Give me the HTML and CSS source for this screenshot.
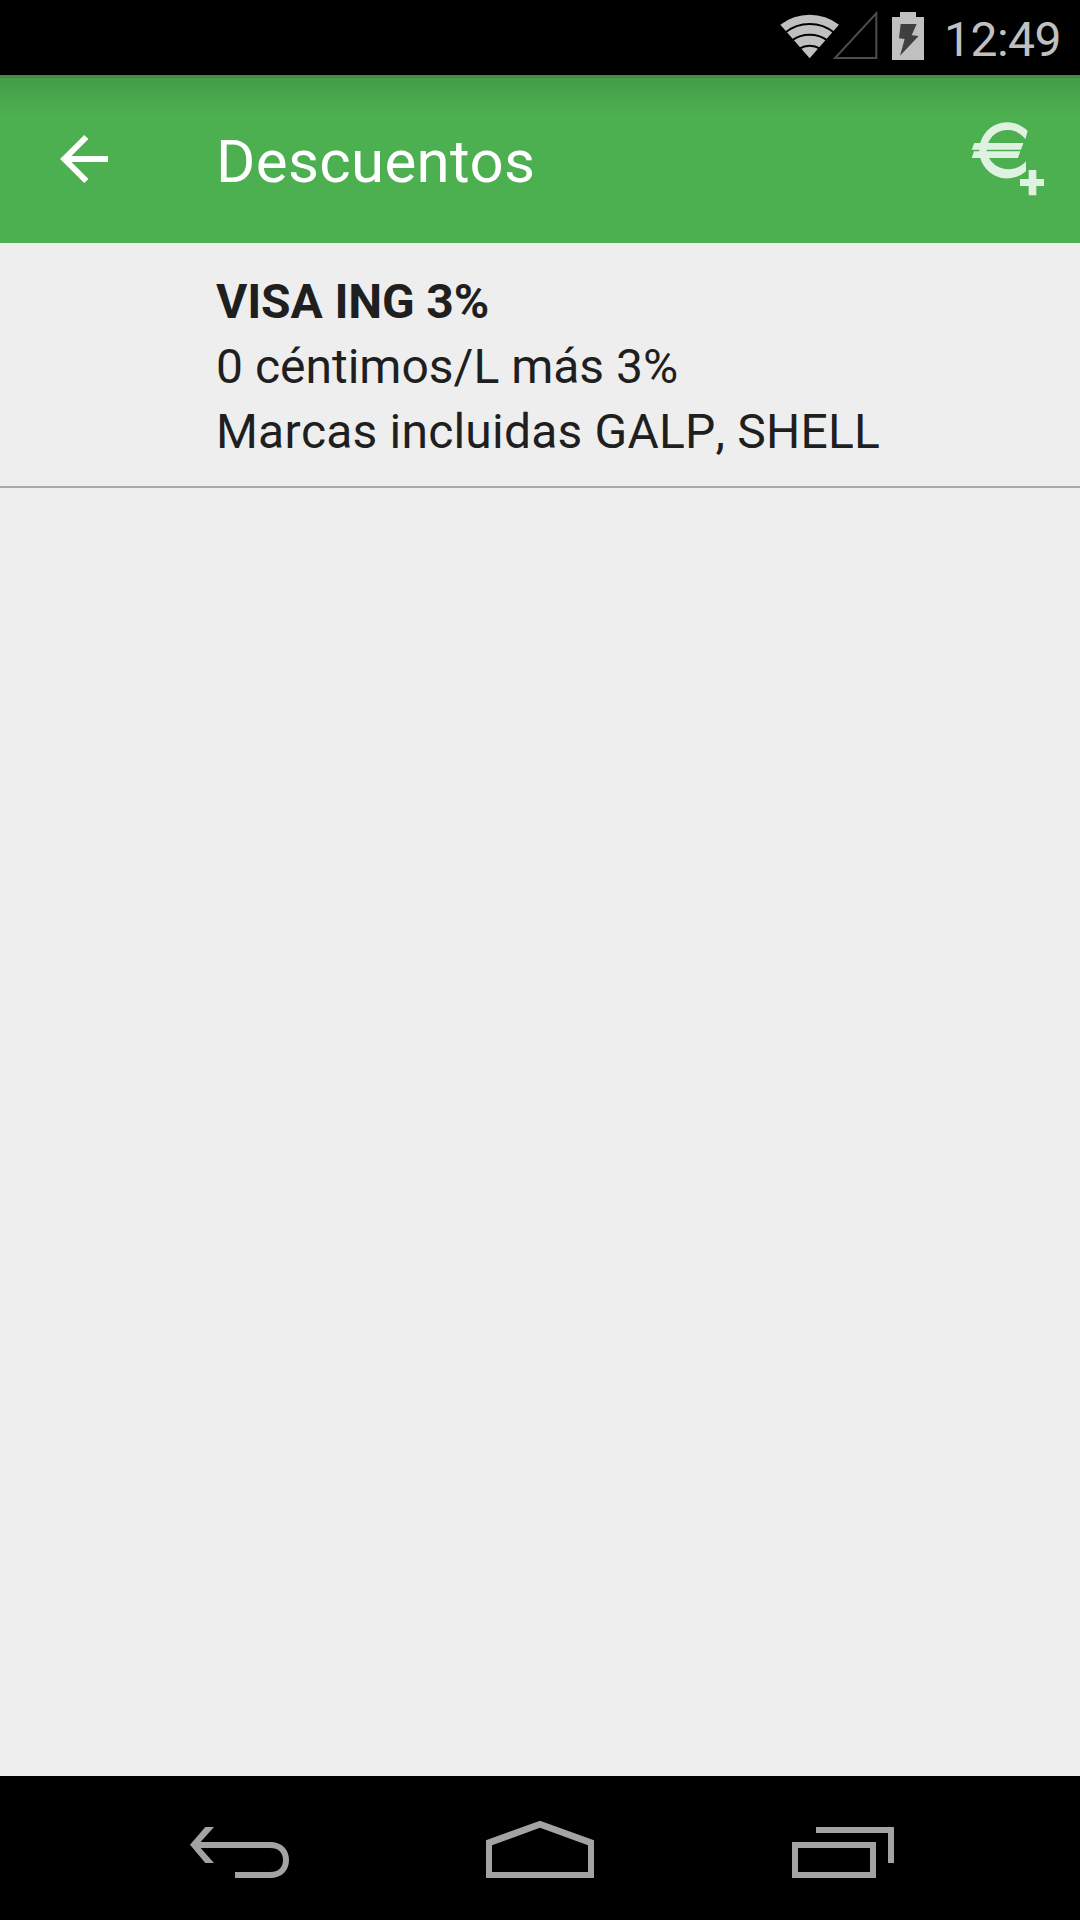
FILE: index.html
```html
<!DOCTYPE html>
<html lang="es">
<head>
<meta charset="utf-8">
<title>Descuentos</title>
<link rel="stylesheet" href="styles.css">
</head>
<body>
<div class="screen">
  <div class="status-bar">
    <svg class="status-icons" viewBox="0 0 480 225" aria-hidden="true">
      <g fill="#c0c0c0">
        <path d="M119 175L31 74A144 144 0 0 1 207 74Z"/>
        <path d="M366 51h24V36h48v15h24v129h-96z"/>
      </g>
      <g fill="none" stroke="#000" stroke-width="6">
        <path d="M45 98A118 118 0 0 1 193 98"/>
        <path d="M66 121A91 91 0 0 1 172 121"/>
        <path d="M88 146A58 58 0 0 1 150 146"/>
      </g>
      <path d="M195 174H319V40Z" fill="none" stroke="#4c4c4c" stroke-width="6"/>
      <path d="M392 72h48l-15 34 21 2-56 59 14-50-17-2z" fill="#404040"/>
    </svg>
    <span class="clock">12:49</span>
  </div>
  <header class="app-bar">
    <svg class="back" viewBox="0 0 300 300" aria-hidden="true">
      <path d="M139 81L73 147l66 66M73 147H204" fill="none" stroke="#fff" stroke-width="18"/>
    </svg>
    <h1 class="title">Descuentos</h1>
    <svg class="add-discount" viewBox="0 0 420 300" aria-hidden="true">
      <g fill="#dff1e0">
        <path d="M263 93A84 83 0 0 0 118 151A84 83 0 0 0 258 214V184A66 61 0 0 1 140 151A63 61 0 0 1 256 118Z"/>
        <path d="M103 129H250L243 149H95ZM102 154H241L234 174H95Z"/>
        <path d="M266 210h23v27h23v21h-23v28h-23v-28h-26v-21h26z"/>
      </g>
    </svg>
  </header>
  <main class="list">
    <article class="discount">
      <h2 class="name">VISA ING 3%</h2>
      <p class="amount">0 céntimos/L más 3%</p>
      <p class="brands">Marcas incluidas GALP, SHELL</p>
    </article>
  </main>
  <nav class="nav-bar">
    <svg class="nav-icon" viewBox="0 0 420 300" aria-hidden="true">
      <path d="M60 134L106 81H132L92 126H300C338 126 357 150 357 180S338 234 300 234H195V216H300C326 216 339 202 339 180S326 144 300 144H92L132 189H106Z"/>
    </svg>
    <svg class="nav-icon" viewBox="0 0 420 300" aria-hidden="true">
      <path fill-rule="evenodd" d="M48 121L210 62L372 121V234H48ZM66 136V216H354V136L210 83Z"/>
    </svg>
    <svg class="nav-icon" viewBox="0 0 420 300" aria-hidden="true">
      <path fill-rule="evenodd" d="M36 126H288V234H36ZM54 144V216H270V144ZM108 81H342V189H324V99H108Z"/>
    </svg>
  </nav>
</div>
</body>
</html>
```
FILE: styles.css
```css
* { box-sizing: border-box; }
body {
  margin: 0;
  font-family: Roboto, "Noto Sans", sans-serif;
}
.screen {
  width: 1080px;
  height: 1920px;
  display: flex;
  flex-direction: column;
  background: #eeeeee;
}
.status-bar {
  height: 75px;
  flex: none;
  display: flex;
  align-items: center;
  justify-content: flex-end;
  padding-right: 18px;
  background: #000;
}
.status-icons {
  width: 160px;
  height: 75px;
  margin-right: 14px;
}
.clock {
  width: 118px;
  padding-top: 4px;
  font-size: 48px;
  line-height: 56px;
  letter-spacing: -0.5px;
  white-space: nowrap;
  color: #c0c0c0;
}
.app-bar {
  height: 168px;
  flex: none;
  display: flex;
  align-items: center;
  padding-left: 40px;
  background: linear-gradient(#46894a 0, #46894a 3px, #449c47 3px, #48a64b 20px, #4caf50 42px);
}
.back {
  width: 100px;
  height: 100px;
  margin: 2px 76px 0 0;
}
.title {
  flex: 1;
  margin: 0;
  padding-top: 5px;
  font-size: 60px;
  font-weight: 400;
  line-height: 70px;
  letter-spacing: 0.35px;
  color: #fff;
}
.add-discount {
  width: 140px;
  height: 100px;
  margin-bottom: 18px;
}
.list { flex: 1; }
.discount {
  padding: 26px 48px 22px 216px;
  border-bottom: 2px solid #a8a8a8;
  color: #1f1f1f;
  font-size: 48px;
  line-height: 65px;
}
.name, .amount, .brands {
  margin: 0;
  font-size: inherit;
  white-space: nowrap;
}
.name { letter-spacing: -0.15px; }
.brands {
  font-kerning: none;
  letter-spacing: 0.2px;
}
.nav-bar {
  height: 144px;
  flex: none;
  display: flex;
  justify-content: space-between;
  padding: 24px 160px 0 170px;
  background: #000;
}
.nav-icon {
  width: 140px;
  height: 100px;
  fill: #a3a3a3;
}
.nav-icon:nth-child(2) {
  margin: 0 10px 0 0;
}
```
